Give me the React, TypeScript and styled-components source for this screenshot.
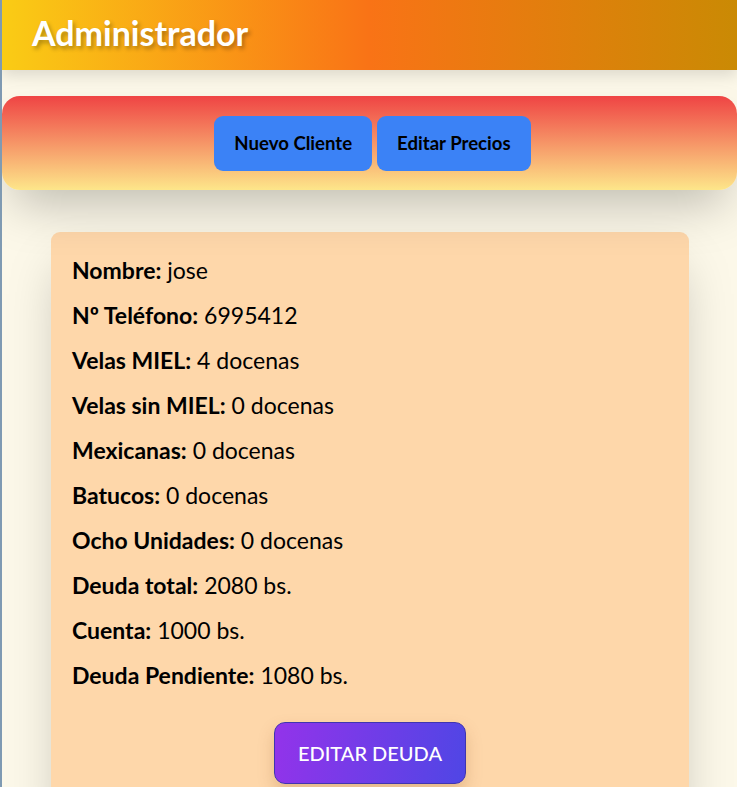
import React from "react";
import styled, { createGlobalStyle } from "styled-components";

const Global = createGlobalStyle`
  html, body { margin: 0; padding: 0; }
  body {
    background: #fcf8e9;
    font-family: Lato, "Segoe UI", "Open Sans", sans-serif;
    color: #000;
    border-left: 2px solid #7f9ab2;
    min-height: 100vh;
    overflow: hidden;
  }
`;

const Page = styled.div`
  display: flex;
  flex-direction: column;
`;

const Header = styled.header`
  height: 70px;
  box-sizing: border-box;
  display: flex;
  align-items: center;
  padding: 0 30px 6px;
  background: linear-gradient(90deg, #facc15 0%, #f97316 50%, #ca8a04 100%);
  box-shadow: 0 6px 14px rgba(0, 0, 0, 0.12);
  position: relative;
  z-index: 2;
`;

const Title = styled.h1`
  margin: 0;
  color: #fff;
  font-size: 34px;
  font-weight: 700;
  text-shadow: 2px 3px 4px rgba(0, 0, 0, 0.3);
`;

const Toolbar = styled.nav`
  margin-top: 26px;
  height: 94px;
  box-sizing: border-box;
  padding-left: 6px;
  border-radius: 18px;
  background: linear-gradient(180deg, #ef4444 0%, #fde68a 100%);
  display: flex;
  justify-content: center;
  align-items: center;
  gap: 5px;
  box-shadow: 0 25px 50px -12px rgba(0, 0, 0, 0.25);
  position: relative;
  z-index: 1;
`;

const ToolButton = styled.button`
  background: #3b82f6;
  border: none;
  border-radius: 9px;
  height: 55px;
  padding: 0 20px;
  color: #000;
  font-family: inherit;
  font-size: 18.6px;
  font-weight: 700;
  cursor: pointer;
`;

const Card = styled.section`
  margin: 42px 48px 0 49px;
  background: #fed7aa;
  border-radius: 9px;
  padding: 26px 21px 40px;
  box-shadow: 0 25px 50px -12px rgba(0, 0, 0, 0.25);
  display: flex;
  flex-direction: column;
`;

const Fields = styled.div`
  display: flex;
  flex-direction: column;
  gap: 20px;
`;

const Field = styled.p`
  margin: 0;
  font-size: 23px;
  line-height: 25px;
`;

const Label = styled.strong`
  font-weight: 700;
`;

const Actions = styled.div`
  display: flex;
  justify-content: center;
  margin-top: 34px;
`;

const ActionButton = styled.button`
  background: linear-gradient(100deg, #9333ea 0%, #4f46e5 100%);
  border: 1px solid #3f35b0;
  border-radius: 11px;
  height: 62px;
  padding: 0 23px;
  color: #fff;
  font-family: inherit;
  font-size: 20px;
  font-weight: 500;
  box-shadow: 0 8px 16px rgba(150, 90, 40, 0.25);
  cursor: pointer;
`;

const fields: [string, string][] = [
  ["Nombre:", "jose"],
  ["Nº Teléfono:", "6995412"],
  ["Velas MIEL:", "4 docenas"],
  ["Velas sin MIEL:", "0 docenas"],
  ["Mexicanas:", "0 docenas"],
  ["Batucos:", "0 docenas"],
  ["Ocho Unidades:", "0 docenas"],
  ["Deuda total:", "2080 bs."],
  ["Cuenta:", "1000 bs."],
  ["Deuda Pendiente:", "1080 bs."],
];

export default function App() {
  return (
    <Page>
      <Global />
      <Header>
        <Title>Administrador</Title>
      </Header>
      <Toolbar>
        <ToolButton>Nuevo Cliente</ToolButton>
        <ToolButton>Editar Precios</ToolButton>
      </Toolbar>
      <Card>
        <Fields>
          {fields.map(([label, value]) => (
            <Field key={label}>
              <Label>{label}</Label> {value}
            </Field>
          ))}
        </Fields>
        <Actions>
          <ActionButton>EDITAR DEUDA</ActionButton>
        </Actions>
      </Card>
    </Page>
  );
}
